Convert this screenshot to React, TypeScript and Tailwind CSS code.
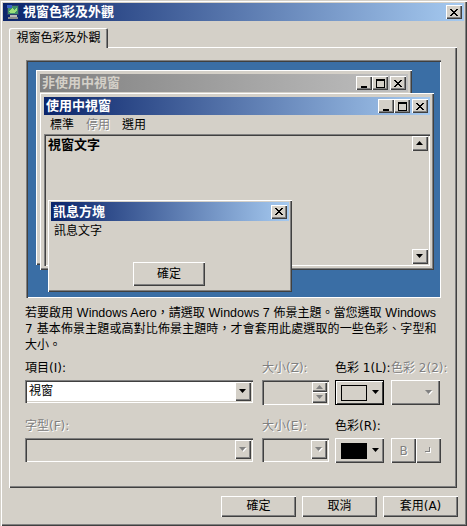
import React from "react";

const raised = "bg-[#d4d0c8] shadow-[inset_1px_1px_0_#ffffff,inset_-1px_-1px_0_#404040,inset_-2px_-2px_0_#808080]";
const sunken = "shadow-[inset_1px_1px_0_#808080,inset_2px_2px_0_#404040,inset_-1px_-1px_0_#ffffff,inset_-2px_-2px_0_#d4d0c8]";
const activeBar = "bg-[linear-gradient(90deg,#0a246a,#a6caf0)]";
const font = "font-['DejaVu_Sans','Noto_Sans_CJK_TC',sans-serif]";
const disabled = "text-[#808080] [text-shadow:1px_1px_0_#ffffff]";
const latin = "font-['Liberation_Sans',sans-serif] text-[12.5px]";

const xRows = [0, 1, 2, 3, 4, 5, 6];

function Glyph({ kind }: { kind: "min" | "max" | "close" }) {
  return (
    <svg width="9" height="9" viewBox="0 0 9 9" shapeRendering="crispEdges">
      {kind === "min" && <rect x="1" y="7" width="6" height="2" fill="#000" />}
      {kind === "max" && <path d="M0 0h9v9H0z M1 2v6h7V2z" fillRule="evenodd" fill="#000" />}
      {kind === "close" &&
        xRows.map((r) => (
          <g key={r} fill="#000">
            <rect x={r} y={r + 1} width="2" height="1" />
            <rect x={6 - r} y={r + 1} width="2" height="1" />
          </g>
        ))}
    </svg>
  );
}

function CapBtn({ kind, w = "w-[16px]" }: { kind: "min" | "max" | "close"; w?: string }) {
  return (
    <div className={`${raised} ${w} h-[14px] flex items-center justify-center`}>
      <Glyph kind={kind} />
    </div>
  );
}

function Arrow({ dir = "down", color = "#000", shadow = false }: { dir?: "down" | "up"; color?: string; shadow?: boolean }) {
  const d = dir === "down" ? "M0 0h7L3.5 4z" : "M3.5 0L7 4H0z";
  return (
    <svg width="8" height="5" viewBox="0 0 8 5">
      {shadow && <path d={d} fill="#fff" transform="translate(1 1)" />}
      <path d={d} fill={color} />
    </svg>
  );
}

function ComboArrow({ off = false }: { off?: boolean }) {
  return (
    <div className={`${raised} w-[16px] h-[19px] mt-[2px] mr-[2px] flex items-center justify-center shrink-0`}>
      <Arrow color={off ? "#808080" : "#000"} shadow={off} />
    </div>
  );
}

function Combo({ className, text, off = false }: { className: string; text?: string; off?: boolean }) {
  return (
    <div className={`${className} ${sunken} ${off ? "" : "bg-white"} flex justify-between`}>
      <span className="pl-[4px] pt-[3px] leading-[17px]">{text}</span>
      <ComboArrow off={off} />
    </div>
  );
}

function Label({ children, off = false, className = "mb-[4px]" }: { children: React.ReactNode; off?: boolean; className?: string }) {
  return <div className={`h-[16px] leading-[16px] whitespace-nowrap ${off ? disabled : ""} ${className}`}>{children}</div>;
}

function FootBtn({ children }: { children: React.ReactNode }) {
  return (
    <button className={`${raised} w-[75px] h-[21px] leading-[19px] text-black`}>{children}</button>
  );
}

function MonitorIcon() {
  return (
    <svg width="16" height="16" viewBox="0 0 16 16" className="shrink-0" shapeRendering="crispEdges">
      <rect x="2" y="1" width="12" height="10" fill="#2b3c6b" />
      <rect x="3" y="2" width="10" height="8" fill="#3f8f6a" />
      <path d="M4 8l3-4 2 2 3-3v3l-3 3H5z" fill="#9be07a" />
      <path d="M2 1h5v3H2z" fill="#3a63c8" />
      <rect x="5" y="11" width="7" height="2" fill="#b9b9b9" />
      <rect x="3" y="13" width="10" height="2" fill="#8d8d8d" />
    </svg>
  );
}

function CornerGlyph() {
  return (
    <svg width="7" height="7" viewBox="0 0 7 7" shapeRendering="crispEdges">
      <path d="M1 5h4V1h1v5H1z" fill="#fff" />
      <path d="M0 4h4V0h1v5H0z" fill="#808080" />
    </svg>
  );
}

function Preview() {
  return (
    <div className={`relative w-[415px] h-[238px] bg-[#3a6ea5] shadow-[inset_1px_1px_0_#808080,inset_2px_2px_0_#404040,inset_-1px_-1px_0_#ffffff]`}>
      <div className={`${raised} absolute left-[10px] top-[10px] w-[376px] h-[195px] p-[4px]`}>
        <div className="h-[18px] bg-[linear-gradient(90deg,#808080,#c0c0c0)] flex items-center justify-between pl-[2px] pr-[2px] font-bold text-[13px] text-[#d4d0c8]">
          <span>非使用中視窗</span>
          <div className="flex items-center"><CapBtn kind="min" /><CapBtn kind="max" /><span className="w-[2px]" /><CapBtn kind="close" /></div>
        </div>
      </div>
      <div className={`${raised} absolute left-[14px] top-[33px] w-[394px] h-[177px] p-[4px] flex flex-col`}>
        <div className={`h-[18px] ${activeBar} flex items-center justify-between pl-[2px] pr-[2px] font-bold text-[13px] text-white shrink-0`}>
          <span>使用中視窗</span>
          <div className="flex items-center"><CapBtn kind="min" /><CapBtn kind="max" /><span className="w-[2px]" /><CapBtn kind="close" /></div>
        </div>
        <div className="h-[19px] flex items-center gap-[12px] pl-[6px] pt-[1px] shrink-0">
          <span>標準</span>
          <span className={disabled}>停用</span>
          <span>選用</span>
        </div>
        <div className={`${sunken} flex-1 flex justify-between pl-[4px] pr-[2px] py-[2px] font-bold text-[13px]`}>
          <span className="leading-[16px] pt-[1px]">視窗文字</span>
          <div className="w-[16px] flex flex-col justify-between">
            <div className={`${raised} h-[15px] flex items-center justify-center`}><Arrow dir="up" /></div>
            <div className={`${raised} h-[15px] flex items-center justify-center`}><Arrow /></div>
          </div>
        </div>
      </div>
      <div className={`${raised} absolute left-[22px] top-[140px] w-[244px] h-[92px] px-[3px] pt-[2px] flex flex-col`}>
        <div className={`h-[19px] ${activeBar} flex items-center justify-between pl-[2px] pr-[2px] font-bold text-[13px] text-white shrink-0`}>
          <span>訊息方塊</span>
          <CapBtn kind="close" />
        </div>
        <div className="pl-[3px] pt-[2px] leading-[16px]">訊息文字</div>
        <div className={`${raised} absolute left-[85px] top-[62px] w-[72px] h-[24px] flex items-center justify-center`}>確定</div>
      </div>
    </div>
  );
}

export default function App() {
  return (
    <div className={`${font} text-[12px] text-black w-[467px] h-[526px] bg-[#d4d0c8] p-[3px] shadow-[inset_1px_1px_0_#d4d0c8,inset_2px_2px_0_#ffffff,inset_-1px_-1px_0_#404040,inset_-2px_-2px_0_#808080] flex flex-col overflow-hidden`}>
      <div className={`h-[18px] ${activeBar} flex items-center justify-between pl-[2px] pr-[2px] shrink-0`}>
        <div className="flex items-center gap-[2px] font-bold text-[13px] text-white">
          <MonitorIcon />
          <span>視窗色彩及外觀</span>
        </div>
        <CapBtn kind="close" />
      </div>
      <div className="ml-[6px] mt-[7px] w-[99px] h-[20px] bg-[#d4d0c8] shadow-[inset_1px_1px_0_#ffffff,inset_-1px_0_0_#404040,inset_-2px_0_0_#808080] flex items-center justify-center shrink-0 relative z-10 rounded-t-[2px]">
        視窗色彩及外觀
      </div>
      <div className="ml-[6px] w-[448px] h-[441px] shrink-0 shadow-[inset_1px_1px_0_#ffffff,inset_-1px_-1px_0_#404040,inset_-2px_-2px_0_#808080] pt-[13px] pl-[17px] -mt-[1px]">
        <Preview />
        <div className="-ml-[1px]">
          <div className="mt-[7px] leading-[16px] whitespace-nowrap">
            <div className="h-[16px]">
              若要啟用 <span className={latin}>Windows Aero</span>{"\uFF0C請選取 "}<span className={latin}>Windows 7</span> 佈景主題。當您選取 <span className={latin}>Windows</span>
            </div>
            <div className="h-[16px] tracking-[0.12px]">{"7 基本佈景主題或高對比佈景主題時\uFF0C才會套用此處選取的一些色彩、字型和"}</div>
            <div className="h-[16px]">大小。</div>
          </div>
          <div className="mt-[7px] flex gap-[9px]">
            <div className="w-[228px]">
              <Label>項目(I):</Label>
              <Combo className="h-[23px]" text="視窗" />
            </div>
            <div className="w-[67px]">
              <Label off>大小(Z):</Label>
              <div className={`${sunken} h-[25px] flex justify-end p-[2px]`}>
                <div className="w-[15px] flex flex-col">
                  <div className={`${raised} h-[10px] flex items-center justify-center`}><Arrow dir="up" color="#808080" /></div>
                  <div className={`${raised} h-[11px] flex items-center justify-center`}><Arrow color="#808080" /></div>
                </div>
              </div>
            </div>
            <div className="w-[49px] -ml-[3px]">
              <Label>色彩 1(L):</Label>
              <div className="bg-[#d4d0c8] h-[25px] shadow-[inset_1px_1px_0_#000,inset_-1px_-1px_0_#000,inset_2px_2px_0_#fff,inset_-2px_-2px_0_#404040] flex items-center gap-[5px] pl-[6px]">
                <div className="w-[26px] h-[16px] border border-black" />
                <Arrow />
              </div>
            </div>
            <div className="w-[49px] -ml-[2px]">
              <Label off>色彩 2(2):</Label>
              <div className={`${raised} h-[25px] flex items-center justify-end pr-[7px]`}>
                <Arrow color="#808080" shadow />
              </div>
            </div>
          </div>
          <div className="mt-[13px] flex gap-[9px]">
            <div className="w-[228px]">
              <Label off>字型(F):</Label>
              <Combo className="h-[24px]" off />
            </div>
            <div className="w-[67px]">
              <Label off>大小(E):</Label>
              <Combo className="h-[24px]" off />
            </div>
            <div className="w-[49px] -ml-[3px]">
              <Label>色彩(R):</Label>
              <div className={`${raised} h-[25px] flex items-center gap-[5px] pl-[6px]`}>
                <div className="w-[26px] h-[16px] bg-black" />
                <Arrow />
              </div>
            </div>
            <div className="flex -ml-[2px] pt-[20px]">
              <div className={`${raised} w-[25px] h-[25px] flex items-center justify-center ${disabled}`}>B</div>
              <div className={`${raised} w-[25px] h-[25px] flex items-center justify-center`}><CornerGlyph /></div>
            </div>
          </div>
        </div>
      </div>
      <div className="mt-[8px] ml-[218px] flex gap-[6px] shrink-0">
        <FootBtn>確定</FootBtn>
        <FootBtn>取消</FootBtn>
        <FootBtn>套用(A)</FootBtn>
      </div>
    </div>
  );
}
